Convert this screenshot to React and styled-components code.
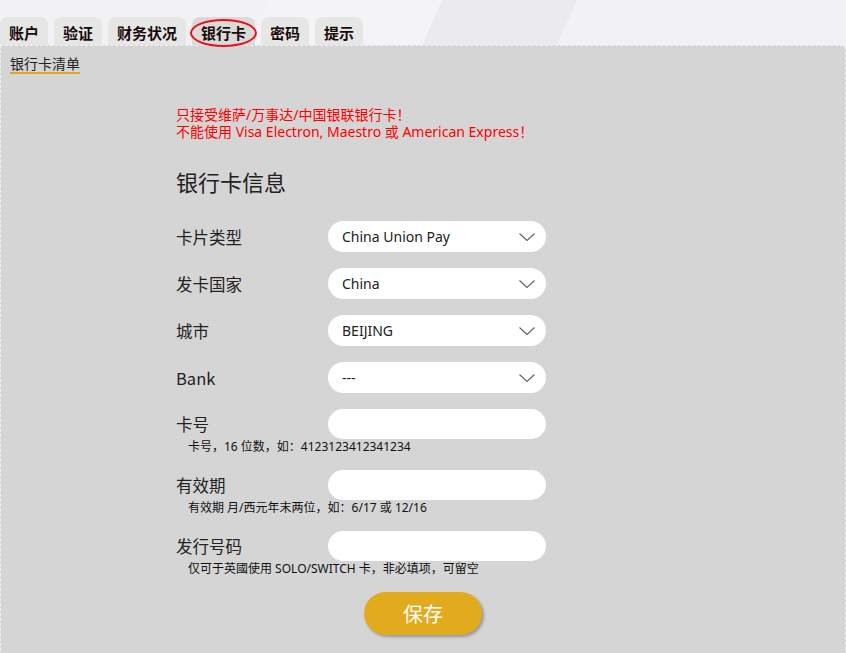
import React from "react";
import styled, { createGlobalStyle } from "styled-components";

const GlobalStyle = createGlobalStyle`
  body {
    margin: 0;
    font-family: "Liberation Sans", "Noto Sans CJK SC", sans-serif;
    color: #222;
  }
`;

const Page = styled.div`
  min-height: 100vh;
  background-color: #f2f2f4;
  background-image: linear-gradient(
    114deg,
    transparent 0,
    transparent 246px,
    #f4f4f6 246px,
    #f4f4f6 404px,
    #ebebed 404px,
    #ebebed 527px,
    transparent 527px
  );
  background-size: 100% 60px;
  background-repeat: no-repeat;
`;

const TabBar = styled.nav`
  display: flex;
  align-items: flex-end;
  gap: 6px;
  padding-top: 17px;
`;

const Tab = styled.div`
  position: relative;
  height: 28px;
  padding: 5px 9px 0;
  box-sizing: border-box;
  border-radius: 8px 8px 0 0;
  background: ${props => (props.active ? "#dadada" : "#e6e6e6")};
  font-family: "Noto Sans CJK SC", sans-serif;
  font-weight: bold;
  font-size: 15px;
  line-height: 22px;
  color: #1a0a0a;
  cursor: pointer;

  /* red circle drawn around the current tab */
  &::after {
    content: "";
    display: ${props => (props.active ? "block" : "none")};
    position: absolute;
    left: -2px;
    right: -2px;
    top: 2px;
    bottom: -2px;
    border: 2.5px solid #e8101a;
    border-radius: 50%;
  }
`;

const Panel = styled.section`
  min-height: 620px;
  background: #d5d5d5;
  border: 1px dashed #f2f2f2;
  border-radius: 0 5px 0 0;
  box-sizing: border-box;
  padding: 8px 0 40px;
`;

const ListLink = styled.a`
  display: inline-block;
  margin-left: 9px;
  font-family: "Noto Sans CJK SC", sans-serif;
  font-size: 14px;
  line-height: 18px;
  color: #222;
  text-decoration: none;
  border-bottom: 2px solid #e5a51c;
`;

const FormArea = styled.div`
  padding-left: 175px;
`;

const Warning = styled.p`
  margin: 32px 0 0;
  font-family: "Noto Sans", "Noto Sans CJK SC", sans-serif;
  font-size: 14px;
  line-height: 17px;
  color: #ff0000;
`;

const Heading = styled.h2`
  margin: 28px 0 0;
  font-family: "Noto Sans CJK SC", sans-serif;
  font-weight: normal;
  font-size: 22px;
  line-height: 26px;
  color: #222;
`;

const Fields = styled.div`
  margin-top: 27px;
  width: 371px;
`;

const Row = styled.div`
  display: grid;
  grid-template-columns: 152px 218px;
  align-items: center;
  margin-bottom: ${props => (props.hint ? "0" : "16px")};
`;

const Label = styled.label`
  font-family: "Noto Sans CJK SC", sans-serif;
  font-size: 16.5px;
  line-height: 20px;
  color: #222;
`;

const SelectWrap = styled.div`
  position: relative;
  height: 31px;
`;

const Select = styled.select`
  appearance: none;
  width: 100%;
  height: 31px;
  border: none;
  border-radius: 16px;
  background: #fff;
  padding: 0 34px 0 14px;
  font-family: "Noto Sans", sans-serif;
  font-size: 14px;
  color: #222;
  outline: none;
`;

const Chevron = styled.svg`
  position: absolute;
  right: 11px;
  top: 12px;
  pointer-events: none;
`;

const TextInput = styled.input`
  width: 100%;
  height: 30px;
  box-sizing: border-box;
  border: none;
  border-radius: 16px;
  background: #fff;
  padding: 0 14px;
  font-size: 14px;
  outline: none;
`;

const Hint = styled.div`
  padding-left: 12px;
  margin-bottom: 15px;
  font-family: "Noto Sans", "Noto Sans CJK SC", sans-serif;
  font-size: 12px;
  line-height: 16px;
  color: #111;
`;

const SaveButton = styled.button`
  margin-left: 188px;
  width: 118px;
  height: 43px;
  border: none;
  border-radius: 22px;
  background: #e2ab1e;
  box-shadow: 2px 2px 3px rgba(0, 0, 0, 0.28);
  font-family: "Noto Sans CJK SC", sans-serif;
  font-size: 20px;
  color: #fff;
  cursor: pointer;
`;

const tabs = ["账户", "验证", "财务状况", "银行卡", "密码", "提示"];

const selects = [
  { label: "卡片类型", value: "China Union Pay" },
  { label: "发卡国家", value: "China" },
  { label: "城市", value: "BEIJING" },
  { label: "Bank", value: "---" },
];

const inputs = [
  { label: "卡号", hint: "卡号，16 位数，如：4123123412341234" },
  { label: "有效期", hint: "有效期 月/西元年末两位，如：6/17 或 12/16" },
  { label: "发行号码", hint: "仅可于英國使用 SOLO/SWITCH 卡，非必填项，可留空" },
];

function ChevronIcon() {
  return (
    <Chevron width="16" height="8" viewBox="0 0 16 8">
      <polyline points="0.5,0.5 8,7.5 15.5,0.5" fill="none" stroke="#666" strokeWidth="1.2" />
    </Chevron>
  );
}

export default function App() {
  return (
    <Page>
      <GlobalStyle />
      <TabBar>
        {tabs.map(t => (
          <Tab key={t} active={t === "银行卡"}>
            {t}
          </Tab>
        ))}
      </TabBar>
      <Panel>
        <ListLink href="#">银行卡清单</ListLink>
        <FormArea>
          <Warning>
            只接受维萨/万事达/中国银联银行卡！
            <br />
            不能使用 Visa Electron, Maestro 或 American Express！
          </Warning>
          <Heading>银行卡信息</Heading>
          <Fields>
            {selects.map(s => (
              <Row key={s.label}>
                <Label>{s.label}</Label>
                <SelectWrap>
                  <Select defaultValue={s.value}>
                    <option>{s.value}</option>
                  </Select>
                  <ChevronIcon />
                </SelectWrap>
              </Row>
            ))}
            {inputs.map(f => (
              <React.Fragment key={f.label}>
                <Row hint>
                  <Label>{f.label}</Label>
                  <TextInput type="text" />
                </Row>
                <Hint>{f.hint}</Hint>
              </React.Fragment>
            ))}
          </Fields>
          <SaveButton>保存</SaveButton>
        </FormArea>
      </Panel>
    </Page>
  );
}
